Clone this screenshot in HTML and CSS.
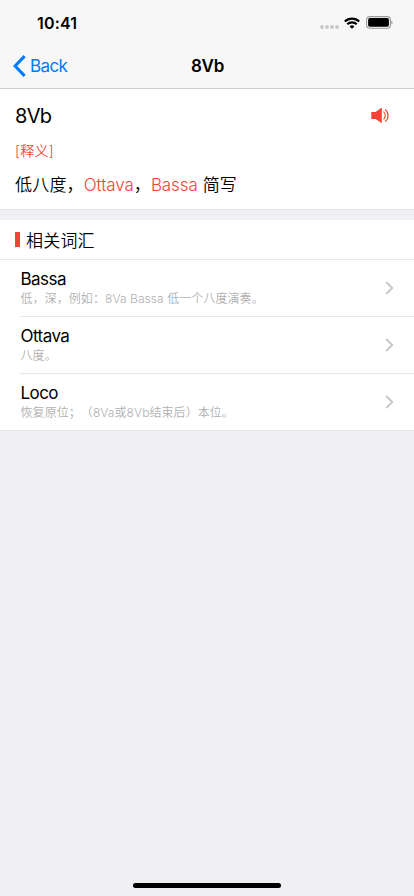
FILE: index.html
```
<!DOCTYPE html>
<html lang="zh-CN">
<head>
    <meta charset="UTF-8">
    <meta name="viewport" content="width=device-width, initial-scale=1.0">
    <title>8Vb</title>
    <link rel="stylesheet" href="styles.css">
</head>
<body>
    <header class="top">
        <div class="status-bar">
            <span class="time">10:41</span>
            <div class="status-icons">
                <svg class="signal" width="19" height="4" viewBox="0 0 19 4" fill="#c7c7c7">
                    <circle cx="2" cy="2" r="1.9"/>
                    <circle cx="7" cy="2" r="1.9"/>
                    <circle cx="12" cy="2" r="1.9"/>
                    <circle cx="17" cy="2" r="1.9"/>
                </svg>
                <svg class="wifi" width="16" height="12" viewBox="0 0 16 12" fill="none" stroke="#000" stroke-width="2.1">
                    <path d="M0.8 4.6a10.3 10.3 0 0 1 14.4 0"/>
                    <path d="M3.3 7.3a6.7 6.7 0 0 1 9.4 0"/>
                    <path d="M8 11.8L5.6 9.4a3.5 3.5 0 0 1 4.8 0z" fill="#000" stroke="none"/>
                </svg>
                <svg class="battery" width="27" height="13" viewBox="0 0 27 13">
                    <rect x="0.6" y="0.6" width="23.8" height="11.6" rx="3.3" fill="none" stroke="#9b9b9b" stroke-width="1.1"/>
                    <rect x="2.1" y="2.1" width="20.8" height="8.6" rx="1.8" fill="#000"/>
                    <path d="M25.4 4.4v4.2c1.5-.7 1.5-3.5 0-4.2z" fill="#8f8f8f"/>
                </svg>
            </div>
        </div>
        <nav class="nav">
            <a class="back" href="#">
                <svg width="13" height="22" viewBox="0 0 13 22" fill="none" stroke="#007aff" stroke-width="3">
                    <path d="M11.6 1.1L2.1 11l9.5 9.9"/>
                </svg>
                <span>Back</span>
            </a>
            <h1 class="title">8Vb</h1>
        </nav>
    </header>

    <section class="word">
        <div class="word-head">
            <h2 class="word-name">8Vb</h2>
            <svg class="speaker" width="20" height="17" viewBox="0 0 20 17">
                <path d="M0.3 4.9h4.3L10.8 0.6v15.6l-6.2-4.3H0.3z" fill="#f44336"/>
                <path d="M12.5 4.7c2.3 2 2.3 5.6 0 7.6M14.1 2.3c4 3.4 4 9 0 12.4" fill="none" stroke="#f44336" stroke-width="1.1"/>
            </svg>
        </div>
        <p class="label">[释义]</p>
        <p class="meaning">低八度，<a href="#">Ottava</a>，<a href="#">Bassa</a> 简写</p>
    </section>

    <section class="related">
        <h3 class="related-title">相关词汇</h3>
        <ul class="list">
            <li class="item">
                <div class="item-text">
                    <p class="item-name">Bassa</p>
                    <p class="item-desc">低，深，例如：8Va Bassa 低一个八度演奏。</p>
                </div>
                <svg class="chevron" width="9" height="14" viewBox="0 0 9 14"><path d="M1.2 1L7.2 7l-6 6"/></svg>
            </li>
            <li class="item">
                <div class="item-text">
                    <p class="item-name">Ottava</p>
                    <p class="item-desc">八度。</p>
                </div>
                <svg class="chevron" width="9" height="14" viewBox="0 0 9 14"><path d="M1.2 1L7.2 7l-6 6"/></svg>
            </li>
            <li class="item">
                <div class="item-text">
                    <p class="item-name">Loco</p>
                    <p class="item-desc">恢复原位；（8Va或8Vb结束后）本位。</p>
                </div>
                <svg class="chevron" width="9" height="14" viewBox="0 0 9 14"><path d="M1.2 1L7.2 7l-6 6"/></svg>
            </li>
        </ul>
    </section>

    <div class="home-bar"></div>
</body>
</html>
```
FILE: styles.css
```
* {
    box-sizing: border-box;
    margin: 0;
    padding: 0;
}
body {
    font-family: Inter, "Noto Sans CJK SC", sans-serif;
    display: flex;
    flex-direction: column;
    height: 100vh;
    background-color: #efeff4;
    color: #000;
    text-spacing-trim: space-all;
}
a {
    text-decoration: none;
}
svg {
    display: block;
    flex: none;
}
.top {
    height: 89px;
    background-color: #f7f7f7;
    border-bottom: 1px solid #cfcfcf;
}
.status-bar {
    display: flex;
    justify-content: space-between;
    align-items: center;
    height: 44px;
    padding: 1px 21px 0 37px;
}
.time {
    font-size: 16px;
    line-height: 20px;
    font-weight: 600;
    letter-spacing: 0.2px;
}
.status-icons {
    display: flex;
    align-items: center;
}
.signal {
    margin: 8px 5px 0 0;
}
.wifi {
    margin-right: 6px;
}
.nav {
    display: grid;
    grid-template-columns: 1fr auto 1fr;
    align-items: center;
    height: 44px;
    padding: 0 12px 0 13px;
}
.back {
    display: flex;
    align-items: center;
    gap: 4px;
    font-size: 17px;
    letter-spacing: -0.6px;
    color: #007aff;
}
.title {
    font-size: 17px;
    font-weight: 600;
    letter-spacing: -0.3px;
}
.word {
    height: 121px;
    padding: 14px 15px 0;
    background-color: #fff;
    border-bottom: 1px solid #e4e4e8;
}
.word-head {
    display: flex;
    justify-content: space-between;
    align-items: center;
    height: 26px;
    padding-right: 8px;
}
.word-name {
    font-size: 20px;
    font-weight: 400;
    letter-spacing: -0.7px;
}
.speaker {
    margin-bottom: 2px;
}
.label {
    margin-top: 12px;
    font-size: 14px;
    line-height: 20px;
    font-weight: 350;
    letter-spacing: 0.3px;
    color: #f44336;
}
.meaning {
    margin-top: 12px;
    font-size: 17px;
    line-height: 24px;
    font-weight: 350;
    letter-spacing: 0.2px;
}
.meaning a {
    letter-spacing: -0.1px;
    color: #f44336;
}
.related {
    margin-top: 10px;
    background-color: #fff;
    border-bottom: 1px solid #e4e4e8;
}
.related-title {
    display: flex;
    align-items: center;
    height: 40px;
    padding-left: 15px;
    font-size: 17px;
    font-weight: 350;
    letter-spacing: 0.2px;
    border-bottom: 1px solid #e9e9ec;
}
.related-title::before {
    content: "";
    width: 5px;
    height: 15px;
    margin-right: 6px;
    background-color: #f44336;
}
.list {
    padding-left: 20px;
    list-style: none;
}
.item {
    display: flex;
    justify-content: space-between;
    align-items: center;
    height: 57px;
    padding-right: 20px;
    border-bottom: 1px solid #e6e6e8;
}
.item:last-child {
    border-bottom-color: transparent;
    margin-bottom: -1px;
}
.item-text {
    padding: 0 0 2px 0.5px;
}
.item-name {
    font-size: 17px;
    line-height: 22px;
    letter-spacing: -0.55px;
}
.item-desc {
    font-size: 12px;
    line-height: 17px;
    font-weight: 350;
    letter-spacing: 0.07px;
    color: #b0b0b0;
}
.chevron {
    fill: none;
    stroke: #c7c7cc;
    stroke-width: 2;
}
.home-bar {
    width: 148px;
    height: 5px;
    margin: auto auto 8px;
    border-radius: 3px;
    background-color: #000;
}
```
